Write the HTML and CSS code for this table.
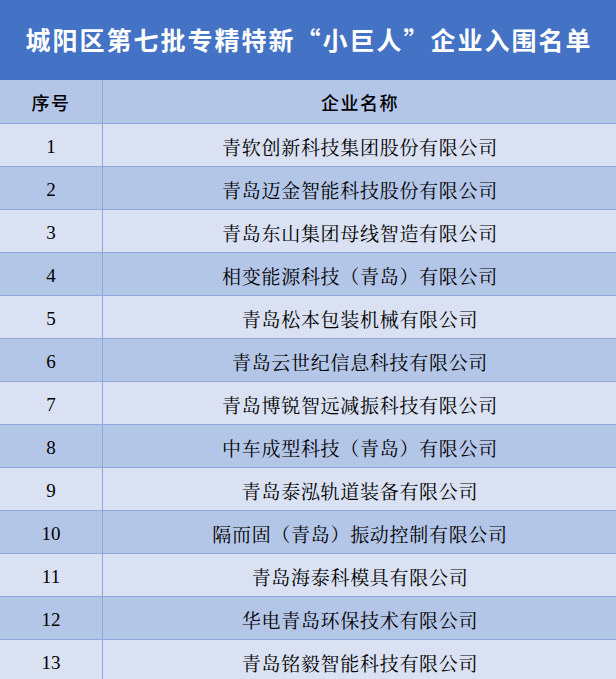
FILE: index.html
```html
<!DOCTYPE html>
<html lang="zh-CN">
<head>
<meta charset="utf-8">
<title>城阳区第七批专精特新“小巨人”企业入围名单</title>
<link rel="stylesheet" href="styles.css">
</head>
<body>
<div class="sheet">
  <div class="title">城阳区第七批专精特新“小巨人”企业入围名单</div>
  <div class="row head">
    <div class="cell num">序号</div>
    <div class="cell name">企业名称</div>
  </div>
  <div class="row odd"><div class="cell num">1</div><div class="cell name">青软创新科技集团股份有限公司</div></div>
  <div class="row even"><div class="cell num">2</div><div class="cell name">青岛迈金智能科技股份有限公司</div></div>
  <div class="row odd"><div class="cell num">3</div><div class="cell name">青岛东山集团母线智造有限公司</div></div>
  <div class="row even"><div class="cell num">4</div><div class="cell name">相变能源科技（青岛）有限公司</div></div>
  <div class="row odd"><div class="cell num">5</div><div class="cell name">青岛松本包装机械有限公司</div></div>
  <div class="row even"><div class="cell num">6</div><div class="cell name">青岛云世纪信息科技有限公司</div></div>
  <div class="row odd"><div class="cell num">7</div><div class="cell name">青岛博锐智远减振科技有限公司</div></div>
  <div class="row even"><div class="cell num">8</div><div class="cell name">中车成型科技（青岛）有限公司</div></div>
  <div class="row odd"><div class="cell num">9</div><div class="cell name">青岛泰泓轨道装备有限公司</div></div>
  <div class="row even"><div class="cell num">10</div><div class="cell name">隔而固（青岛）振动控制有限公司</div></div>
  <div class="row odd"><div class="cell num">11</div><div class="cell name">青岛海泰科模具有限公司</div></div>
  <div class="row even"><div class="cell num">12</div><div class="cell name">华电青岛环保技术有限公司</div></div>
  <div class="row odd"><div class="cell num">13</div><div class="cell name">青岛铭毅智能科技有限公司</div></div>
</div>
</body>
</html>
```
FILE: styles.css
```css
html, body {
  margin: 0;
  padding: 0;
  background: #d9e1f2;
}
.sheet {
  width: 616px;
  overflow: hidden;
}
.title {
  height: 80px;
  background: #4472c4;
  color: #ffffff;
  font-family: "Noto Sans CJK SC", "Noto Sans", sans-serif;
  font-weight: 700;
  font-size: 25px;
  letter-spacing: 2px;
  display: flex;
  align-items: center;
  justify-content: center;
  padding-left: 2px;
  padding-bottom: 3px;
  box-sizing: border-box;
}
.row {
  display: grid;
  grid-template-columns: 103px 1fr;
  height: 43px;
  border-bottom: 1px solid #8eaadb;
  box-sizing: border-box;
}
.row.head {
  height: 44px;
  background: #b4c6e7;
}
.row.odd { background: #d9e1f2; }
.row.even { background: #b4c6e7; }
.cell {
  display: flex;
  align-items: center;
  justify-content: center;
  color: #000000;
  font-size: 19px;
  padding-top: 3px;
  box-sizing: border-box;
  font-family: "Liberation Serif", "Noto Serif CJK SC", "Noto Sans CJK SC", serif;
}
.cell.num {
  border-right: 1px solid #8eaadb;
}
.cell.name {
  letter-spacing: 0.7px;
  padding-left: 1px;
}
.row.head .cell {
  font-family: "Noto Sans CJK SC", "Noto Sans", sans-serif;
  font-weight: 500;
  font-size: 18px;
  letter-spacing: 1.5px;
  padding-top: 1px;
}
```
